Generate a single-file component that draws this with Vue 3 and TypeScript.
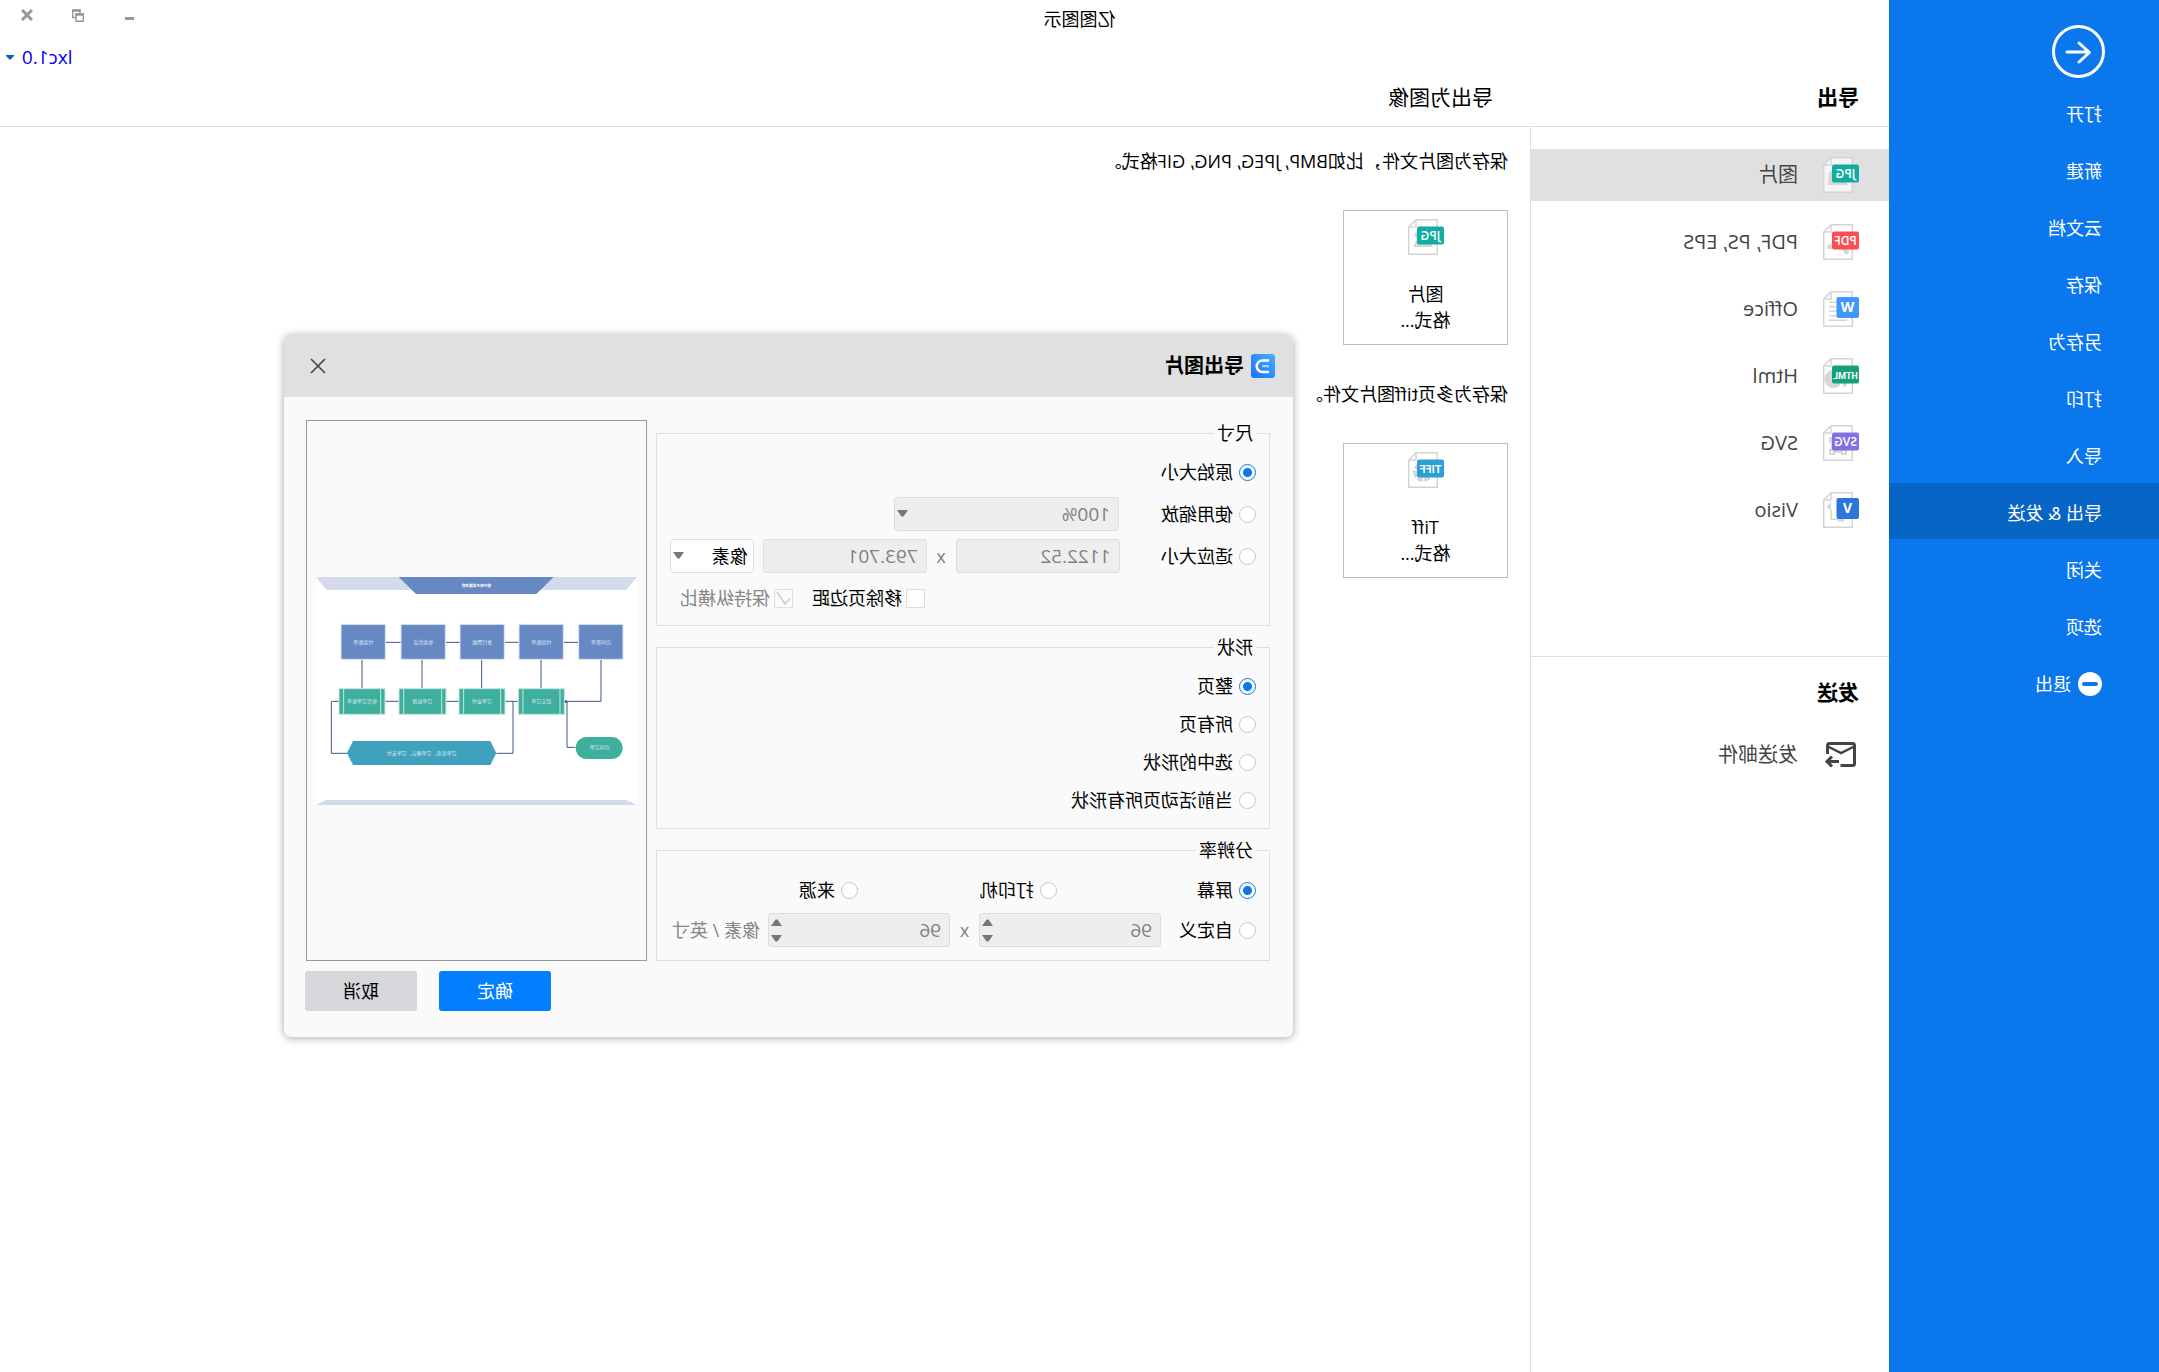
<script setup lang="ts">
import { ref } from 'vue'

interface FormatItem {
  label: string
  tag: string
  color: string
  kind: string
}

const menu = ['打开', '新建', '云文档', '保存', '另存为', '打印', '导入', '导出 & 发送', '关闭', '选项']
const activeMenu = ref('导出 & 发送')

const formats: FormatItem[] = [
  { label: '图片', tag: 'JPG', color: '#12ada0', kind: 'image' },
  { label: 'PDF, PS, EPS', tag: 'PDF', color: '#fc4f55', kind: 'pdf' },
  { label: 'Office', tag: 'W', color: '#3f98fd', kind: 'lines' },
  { label: 'Html', tag: 'HTML', color: '#14a176', kind: 'globe' },
  { label: 'SVG', tag: 'SVG', color: '#8370e2', kind: 'vector' },
  { label: 'Visio', tag: 'V', color: '#2b76d9', kind: 'flow' },
]
const activeFormat = ref('图片')

const exportsList = [
  { text: '保存为图片文件，比如BMP, JPEG, PNG, GIF格式。', name: '图片', tag: 'JPG', color: '#12ada0', kind: 'image' },
  { text: '保存为多页tiff图片文件。', name: 'Tiff', tag: 'TIFF', color: '#2d9fd8', kind: 'gear' },
]

const size = ref('原始大小')
const shape = ref('整页')
const shapes = ['整页', '所有页', '选中的形状', '当前活动页所有形状']
const resolution = ref('屏幕')

const topNodes = [
  { x: 44, t: '合同签单' },
  { x: 223, t: '付款账单' },
  { x: 400, t: '发行票据' },
  { x: 577, t: '收款凭证' },
  { x: 757, t: '付款账单' },
]
const subNodes = [
  { x: 218, w: 138, t: '提交订单' },
  { x: 396, w: 138, t: '订单支付' },
  { x: 573, w: 141, t: '订单处理' },
  { x: 756, w: 138, t: '收货订单账单' },
]

const isShort = (tag: string) => tag.length === 1
</script>

<template>
  <div class="app">
    <nav class="side">
      <button class="back" aria-label="返回">
        <svg width="54" height="54" viewBox="0 0 54 54" fill="none" stroke="#fff" stroke-width="3">
          <circle cx="26.500" cy="26.500" r="25" />
          <path d="M38 27H16.500M26 18L15.500 27.500L26 37" stroke-linecap="round" stroke-linejoin="round" />
        </svg>
      </button>
      <button
        v-for="m in menu"
        :key="m"
        class="side-item"
        :class="{ active: m === activeMenu }"
        @click="activeMenu = m"
      >{{ m }}</button>
      <button class="side-item">
        <svg width="24" height="24" viewBox="0 0 24 24">
          <circle cx="12" cy="12" r="12" fill="#fff" />
          <rect x="4" y="10" width="16" height="4" rx="2" fill="#0a77ec" />
        </svg>
        退出
      </button>
    </nav>

    <div class="work">
      <header class="top">
        <h1>亿图图示</h1>
        <div class="win">
          <button aria-label="最小化">
            <svg width="12" height="12" viewBox="0 0 12 12"><path d="M1 9.500h9" stroke="#979797" stroke-width="3" /></svg>
          </button>
          <button aria-label="还原">
            <svg width="12" height="13" viewBox="0 0 12 13" fill="none" stroke="#979797">
              <path d="M.700 5V12.300H8V5zM4 5V1.500h7.300V8.500H8" stroke-width="1.400" />
              <path d="M0 5.500h8.700M3.300 1.500H12" stroke-width="2.400" />
            </svg>
          </button>
          <button aria-label="关闭">
            <svg width="12" height="12" viewBox="0 0 12 12"><path d="M1 1l10 10M11 1L1 11" stroke="#979797" stroke-width="3" /></svg>
          </button>
        </div>
        <button class="user">
          lxc1.0
          <svg width="8" height="5" viewBox="0 0 8 5"><path d="M0 0h8v1L4 5L0 1z" fill="#0a5fc0" /></svg>
        </button>
        <div class="titles">
          <h2>导出</h2>
          <h3>导出为图像</h3>
        </div>
      </header>

      <div class="cols">
        <aside class="formats">
          <ul>
            <li v-for="f in formats" :key="f.label">
              <button class="fmt" :class="{ active: f.label === activeFormat }" @click="activeFormat = f.label">
                <svg class="doc" width="36" height="36" viewBox="0 0 36 36">
                  <path d="M7 .700H28L35.300 8V35.300H6.700V1z" fill="#fff" fill-opacity=".7" stroke="#d3d3d3" stroke-width="1.400" />
                  <path d="M28 1V8H35" fill="none" stroke="#d3d3d3" stroke-width="1.400" />
                  <g fill="#d6d6d6">
                    <path v-if="f.kind === 'image'" d="M11 28L19 17L23 22L27 18V28zM27 14a3 3 0 0 1 3 3l1 11H24z" />
                    <path v-if="f.kind === 'pdf'" d="M10 27q4-6 8-3l-4 6q-4 2-4-3zM26 20q6 0 6 4q-3 3-7-1z" />
                    <path v-if="f.kind === 'lines'" d="M22 10.500h8v1.500h-8zM22 15h8v1.500h-8zM22 19.500h8v1.500h-8zM22 24h8v1.500h-8zM12 28.500h18v1.500H12z" />
                    <path v-if="f.kind === 'globe'" d="M26 12a9 9 0 1 1-8 14l6-14zM12 25h4v4h-2q-2-1-2-4z" />
                    <path v-if="f.kind === 'vector'" d="M24 12h6v6h-2v6h2v6h-6v-2h-6v2h-6v-6h12v-6h2v-4zM14 26v2h2v-2zM26 26v2h2v-2z" fill-rule="evenodd" />
                    <path v-if="f.kind === 'flow'" d="M28 10l4.500 4.500L28 19zM27 18h1.500v10H21v1.500h-6V24h6v2.500h6z" />
                  </g>
                  <rect v-if="isShort(f.tag)" y="6" width="22.500" height="21" rx="2" :fill="f.color" />
                  <rect v-else y="7.500" width="27" height="18" rx="2" :fill="f.color" />
                  <text :x="isShort(f.tag) ? 11.500 : 13.500" :y="isShort(f.tag) ? 21 : 20.500" class="tag" :class="isShort(f.tag) ? 'letter' : f.tag.toLowerCase()">{{ f.tag }}</text>
                </svg>
                {{ f.label }}
              </button>
            </li>
          </ul>
          <section class="send">
            <h2>发送</h2>
            <button class="mail">
              <svg width="36" height="28" viewBox="0 0 36 28" fill="none" stroke="#444" stroke-width="3">
                <path d="M18.500 24.500H6.500a2 2 0 0 1-2-2V4.500a2 2 0 0 1 2-2H29.500a2 2 0 0 1 2 2V13" />
                <path d="M5 5.500L18 12L31 5.500" stroke-width="2.500" />
                <path d="M20 20.500H31M27 15.500L32 20.500L27 25.500" />
              </svg>
              发送邮件
            </button>
          </section>
        </aside>

        <main class="export">
          <section v-for="e in exportsList" :key="e.name">
            <p>{{ e.text }}</p>
            <button class="card">
              <svg class="doc" width="36" height="36" viewBox="0 0 36 36">
                <path d="M7 .700H28L35.300 8V35.300H6.700V1z" fill="#fff" stroke="#d3d3d3" stroke-width="1.400" />
                <path d="M28 1V8H35" fill="none" stroke="#d3d3d3" stroke-width="1.400" />
                <path v-if="e.kind === 'image'" d="M11 28L19 17L23 22L27 13a3 3 0 0 1 2 4l-2 3l4 8z" fill="#d6d6d6" />
                <circle v-else cx="21" cy="20" r="7.500" fill="none" stroke="#d6d6d6" stroke-width="5" stroke-dasharray="5 1.500" />
                <rect y="7.500" width="27" height="18" rx="2" :fill="e.color" />
                <text x="13.500" y="20.500" class="tag" :class="e.tag.toLowerCase()">{{ e.tag }}</text>
              </svg>
              <span>{{ e.name }}<br>格式...</span>
            </button>
          </section>
        </main>
      </div>
    </div>

    <div class="dialog" role="dialog" aria-label="导出图片">
      <header class="bar">
        <svg width="24" height="24" viewBox="0 0 24 24">
          <defs>
            <linearGradient id="logo" x1="0" y1="0" x2="1" y2="1">
              <stop offset="0" stop-color="#4aaeff" />
              <stop offset="1" stop-color="#1672f8" />
            </linearGradient>
          </defs>
          <rect width="24" height="24" rx="3" fill="url(#logo)" />
          <path d="M6 6.500h6.500a5.500 5.500 0 0 1 0 11.500H6" fill="none" stroke="#fff" stroke-width="2.600" />
          <path d="M6 12.200h7" stroke="#a9d6ff" stroke-width="2.200" />
        </svg>
        <h2>导出图片</h2>
        <button class="close" aria-label="关闭">
          <svg width="16" height="16" viewBox="0 0 16 16"><path d="M1 1l14 14M15 1L1 15" stroke="#444" stroke-width="1.600" /></svg>
        </button>
      </header>

      <div class="body">
        <form class="options" @submit.prevent>
          <fieldset class="g-size">
            <legend>尺寸</legend>
            <div class="row">
              <label class="pick"><input v-model="size" type="radio" name="size" value="原始大小">原始大小</label>
            </div>
            <div class="row">
              <label class="pick first"><input v-model="size" type="radio" name="size" value="使用缩放">使用缩放</label>
              <span class="drop zoom">
                <select disabled aria-label="缩放"><option>100%</option></select>
                <svg width="11" height="7" viewBox="0 0 11 7"><path d="M0 0h11L6.500 6.500h-2z" /></svg>
              </span>
            </div>
            <div class="row">
              <label class="pick first"><input v-model="size" type="radio" name="size" value="适应大小">适应大小</label>
              <input class="num" type="text" value="1122.52" disabled aria-label="宽度">
              <span class="by">x</span>
              <input class="num" type="text" value="793.701" disabled aria-label="高度">
              <span class="drop unit">
                <select aria-label="单位"><option>像素</option></select>
                <svg width="11" height="7" viewBox="0 0 11 7"><path d="M0 0h11L6.500 6.500h-2z" /></svg>
              </span>
            </div>
            <div class="row checks">
              <label><input type="checkbox">移除页边距</label>
              <label class="off"><input type="checkbox" checked disabled>保持纵横比</label>
            </div>
          </fieldset>

          <fieldset class="g-shape">
            <legend>形状</legend>
            <div v-for="s in shapes" :key="s" class="row">
              <label class="pick"><input v-model="shape" type="radio" name="shape" :value="s">{{ s }}</label>
            </div>
          </fieldset>

          <fieldset class="g-res">
            <legend>分辨率</legend>
            <div class="row thirds">
              <label v-for="r in ['屏幕', '打印机', '来源']" :key="r" class="pick">
                <input v-model="resolution" type="radio" name="res" :value="r">{{ r }}
              </label>
            </div>
            <div class="row">
              <label class="pick custom"><input v-model="resolution" type="radio" name="res" value="自定义">自定义</label>
              <span class="spin">
                <input type="number" value="96" disabled aria-label="水平分辨率">
                <svg width="11" height="23" viewBox="0 0 11 23"><path d="M0 7h11L6.500 .500h-2zM0 16h11L6.500 22.500h-2z" /></svg>
              </span>
              <span class="by">x</span>
              <span class="spin">
                <input type="number" value="96" disabled aria-label="垂直分辨率">
                <svg width="11" height="23" viewBox="0 0 11 23"><path d="M0 7h11L6.500 .500h-2zM0 16h11L6.500 22.500h-2z" /></svg>
              </span>
              <span class="per">像素 / 英寸</span>
            </div>
          </fieldset>
        </form>

        <div class="right">
          <div class="preview">
            <svg viewBox="0 0 963 684">
              <rect width="963" height="684" fill="#fff" />
              <g fill="#d3dbeb">
                <path d="M0 0H963L932 39H32z" />
                <path d="M32 669H932L963 684H0z" />
              </g>
              <path d="M250 0H715L663 51H302z" fill="#6689c4" />
              <g fill="none" stroke="#3d5789" stroke-width="3">
                <path d="M176 196H757M108 248V373H218" />
                <path d="M288 248V334M466 248V334M645 248V334M825 248V334" />
                <path d="M356 373H917V529H868M372 373V529H422M218 373H210V511H185" />
              </g>
              <circle cx="214" cy="374" r="4" fill="#3d5789" />
              <g stroke="#e0e6f2" stroke-width="3" fill="#6689c4">
                <rect v-for="n in topNodes" :key="n.x" :x="n.x - 2" y="142" width="133" height="105" />
              </g>
              <g v-for="n in subNodes" :key="n.x" stroke="#c9e8e0" stroke-width="3" fill="#3eaf9d">
                <rect :x="n.x" y="335" :width="n.w" height="77" />
                <path :d="`M${n.x + 13} 335v77M${n.x + n.w - 14} 335v77`" />
              </g>
              <path d="M440 492H852L870 528L852 564H440L422 528z" fill="#40a1be" />
              <rect x="43" y="480" width="141" height="66" rx="33" fill="#3eaf9d" />
              <g class="nodes">
                <text class="head" x="482" y="31">银行电子票据流程</text>
                <text v-for="n in topNodes" :key="n.x" :x="n.x + 64" y="202">{{ n.t }}</text>
                <text v-for="n in subNodes" :key="n.x" :x="n.x + n.w / 2" y="379">{{ n.t }}</text>
                <text x="646" y="535">订单查询、订单确认、订单支付</text>
                <text x="112" y="517">合同订单</text>
              </g>
            </svg>
          </div>
          <div class="actions">
            <button class="ok">确定</button>
            <button class="cancel">取消</button>
          </div>
        </div>
      </div>
    </div>
  </div>
</template>

<style>
body { margin: 0; background: #fff; }
</style>

<style scoped>
.app {
  position: relative;
  display: flex;
  min-height: 100vh;
  transform: scaleX(-1);
  background: #fff;
  color: #000;
  font: 18px/26px "Open Sans", "Noto Sans CJK SC", sans-serif;
  box-sizing: border-box;
}
.app * { box-sizing: border-box; }
button, input, select { font: inherit; color: inherit; margin: 0; }
button { border: 0; padding: 0; background: none; text-align: left; }
h1, h2, h3, p, ul { margin: 0; padding: 0; list-style: none; font-weight: 400; }
svg { display: block; flex: none; }

.side {
  width: 270px;
  flex: none;
  display: flex;
  flex-direction: column;
  gap: 1px;
  background: #0a77ec;
  color: #fff;
}
.back { height: 83px; padding: 25px 54px 4px; }
.side-item {
  display: flex;
  align-items: center;
  gap: 7px;
  height: 56px;
  padding: 3px 57px 0;
  white-space: nowrap;
}
.side-item.active { background: #0765c5; }

.work { flex: 1; min-width: 0; display: flex; flex-direction: column; }
.top {
  position: relative;
  height: 127px;
  border-bottom: 1px solid #dedede;
  display: flex;
  flex-direction: column;
  justify-content: space-between;
}
h1 { font-size: 18px; line-height: 26px; padding-top: 6px; margin-left: -270px; text-align: center; }
.win { position: absolute; top: 5px; right: 21px; display: flex; gap: 39px; }
.win button { height: 20px; display: flex; align-items: center; }
.user {
  position: absolute;
  top: 44px;
  right: 6px;
  display: flex;
  align-items: center;
  gap: 8px;
  font-size: 19px;
  color: #00f;
}
.titles { display: flex; padding: 0 0 14px 30px; }
.titles h2, .titles h3 { font-size: 21px; line-height: 30px; }
h2 { font-weight: 700; }
.titles h2 { width: 366px; }

.cols { flex: 1; display: flex; }
.formats { width: 359px; flex: none; border-right: 1px solid #dedede; padding-top: 22px; }
.formats ul { display: flex; flex-direction: column; gap: 15px; padding-bottom: 120px; }
.fmt {
  display: flex;
  align-items: center;
  gap: 25px;
  width: 100%;
  height: 52px;
  padding-left: 30px;
  font-size: 20px;
  color: #444;
}
.fmt.active { background: #e0e0e0; }
.tag {
  fill: #fff;
  font-family: "Open Sans", sans-serif;
  font-size: 12px;
  font-weight: 600;
  text-anchor: middle;
}
.letter { font-size: 14px; font-weight: 700; }
.html { font-family: Roboto, sans-serif; font-size: 9px; font-weight: 700; }
.tiff { font-family: Roboto, sans-serif; font-size: 11px; }
.send { border-top: 1px solid #dedede; padding: 20px 30px; }
.send h2 { font-size: 21px; line-height: 30px; }
.mail { display: flex; align-items: center; gap: 25px; margin-top: 34px; font-size: 20px; color: #444; }

.export { flex: 1; padding: 21px 22px; }
.export p { line-height: 26px; }
.card {
  display: flex;
  flex-direction: column;
  align-items: center;
  gap: 26px;
  width: 165px;
  height: 135px;
  margin: 36px 0;
  padding-top: 8px;
  border: 1px solid #bdbdbd;
  text-align: center;
}
.card .doc { margin-right: 2px; }

.dialog {
  position: absolute;
  left: 866px;
  top: 335px;
  width: 1009px;
  background: #fafafa;
  border-radius: 7px;
  overflow: hidden;
  box-shadow: 0 1px 8px rgba(0, 0, 0, .35);
}
.bar { display: flex; align-items: center; gap: 7px; height: 62px; padding: 0 26px 0 18px; background: #e0e0e0; }
.bar h2 { font-size: 20px; line-height: 28px; }
.close { margin-left: auto; width: 16px; height: 16px; }
.body { display: flex; gap: 9px; padding: 23px 21px 26px 23px; }
.options { width: 614px; display: flex; flex-direction: column; gap: 8px; }
fieldset {
  display: flex;
  flex-direction: column;
  margin: 0;
  min-width: 0;
  padding: 9px 13px 11px;
  border: 1px solid #dedfe1;
}
.g-size { gap: 8px; padding-bottom: 10px; }
.g-shape { gap: 4px; }
.g-res { gap: 6px; padding: 10px 13px 13px; }
legend { padding: 0 3px; line-height: 26px; }
.row { display: flex; align-items: center; height: 34px; }
.row label { display: flex; align-items: center; gap: 6px; white-space: nowrap; }
.first { width: 137px; }
.custom { width: 95px; }
.thirds .pick { width: 199px; }
.thirds .pick:last-child { width: auto; }
input[type="radio"] {
  appearance: none;
  width: 17px;
  height: 17px;
  border: 1px solid #c6c6c6;
  border-radius: 50%;
  background: #fff;
}
input[type="radio"]:checked {
  border-color: #0a77ec;
  background: radial-gradient(circle, #0a77ec 4px, #fff 5px);
}
input[type="checkbox"] {
  appearance: none;
  width: 19px;
  height: 19px;
  border: 1px solid #dcdde0;
  background: #fff;
}
input[type="checkbox"]:checked {
  background: #fafafa;
  background-image: url("data:image/svg+xml,%3Csvg xmlns='http://www.w3.org/2000/svg' viewBox='0 0 17 17'%3E%3Cpath d='M2 8.500L7 14L15 2' fill='none' stroke='%23ccc' stroke-width='1.500'/%3E%3C/svg%3E");
}
.row.checks { padding-left: 331px; gap: 19px; }
.row.checks label { gap: 4px; }
.off { color: #858585; }
.num, .drop select, .spin input {
  height: 34px;
  padding: 0 8px;
  border: 1px solid #dcdde0;
  border-radius: 3px;
  background: #eee;
  font-size: 19px;
  color: #808080;
  opacity: 1;
}
.num { width: 164px; }
.by { width: 29px; text-align: center; color: #808080; }
.drop, .spin { position: relative; display: block; }
.drop select { appearance: none; width: 100%; }
.drop svg, .spin svg { position: absolute; right: 3px; top: 13px; fill: #777; }
.zoom { width: 225px; }
.unit { width: 84px; margin-left: 9px; }
.unit select { background: #fff; color: #000; font-size: 18px; padding: 0 5px; }
.spin input { appearance: textfield; width: 182px; display: block; }
.spin input::-webkit-inner-spin-button { appearance: none; }
.spin svg { top: 6px; }
.per { margin-left: 8px; color: #858585; white-space: nowrap; }

.right { flex: 1; min-width: 0; }
.preview {
  height: 541px;
  display: flex;
  align-items: center;
  margin-right: 1px;
  padding: 0 9px;
  border: 1px solid #999;
}
.preview svg { width: 100%; }
.nodes { fill: #dbe8f4; font-size: 15px; text-anchor: middle; }
.nodes .head { fill: #fff; font-size: 11px; font-weight: 700; }
.actions { display: flex; justify-content: flex-end; gap: 22px; margin-top: 10px; }
.actions button { width: 112px; height: 40px; border-radius: 3px; text-align: center; }
.ok { background: #037eff; color: #fff; }
.cancel { background: #d5d7db; }
</style>
